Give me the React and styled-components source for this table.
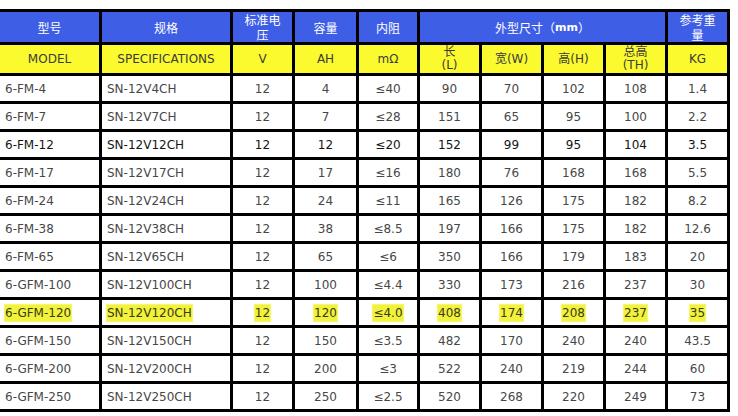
import React from "react";
import styled, { createGlobalStyle, css } from "styled-components";

const Global = createGlobalStyle`
  html, body { margin: 0; padding: 0; background: #ffffff; overflow: hidden; }
  body { font-family: "DejaVu Sans", "Noto Sans CJK SC", sans-serif; }
`;

const Page = styled.div`
  width: 738px;
  height: 416px;
  overflow: hidden;
  padding-top: 9px;
  box-sizing: border-box;
`;

const Grid = styled.div`
  display: grid;
  grid-template-columns: 102px 131px 62px 64px 61px 62px 62px 62px 62px 62px;
  grid-template-rows: 33px 31px repeat(12, 28px);
  width: max-content;
  margin-left: -3px;
  border-top: 3px solid #000;
  border-left: 3px solid #000;
`;

const cellBase = css`
  box-sizing: border-box;
  border-right: 3px solid #000;
  border-bottom: 3px solid #000;
  display: flex;
  align-items: center;
  font-size: 12px;
  white-space: nowrap;
  overflow: hidden;
`;

const HeaderCell = styled.div`
  ${cellBase};
  grid-column: ${(p) => (p.$span ? `span ${p.$span}` : "auto")};
  background: #3f5ee6;
  color: #ffffff;
  justify-content: center;
  text-align: center;
  line-height: 15px;
  font-family: "Noto Sans CJK SC", "DejaVu Sans", sans-serif;
`;

const Unit = styled.span`
  font-family: "DejaVu Sans", sans-serif;
  font-weight: bold;
  font-size: 11px;
`;

const SubHeaderCell = styled.div`
  ${cellBase};
  background: #fafa2e;
  color: #3a3a3a;
  justify-content: center;
  text-align: center;
  line-height: 13px;
`;

const DataCell = styled.div`
  ${cellBase};
  background: #ffffff;
  color: ${(p) => (p.$dark ? "#151515" : "#474747")};
  justify-content: ${(p) => (p.$left ? "flex-start" : "center")};
  padding-left: ${(p) => (p.$left ? "5px" : "0")};
`;

const Mark = styled.span`
  background: #f2f23a;
  color: #3a3a1a;
  padding: 1px 0;
  box-shadow: 0 0 1px 1px #f5f57a;
`;

const rows = [
  ["6-FM-4", "SN-12V4CH", "12", "4", "≤40", "90", "70", "102", "108", "1.4"],
  ["6-FM-7", "SN-12V7CH", "12", "7", "≤28", "151", "65", "95", "100", "2.2"],
  ["6-FM-12", "SN-12V12CH", "12", "12", "≤20", "152", "99", "95", "104", "3.5"],
  ["6-FM-17", "SN-12V17CH", "12", "17", "≤16", "180", "76", "168", "168", "5.5"],
  ["6-FM-24", "SN-12V24CH", "12", "24", "≤11", "165", "126", "175", "182", "8.2"],
  ["6-FM-38", "SN-12V38CH", "12", "38", "≤8.5", "197", "166", "175", "182", "12.6"],
  ["6-FM-65", "SN-12V65CH", "12", "65", "≤6", "350", "166", "179", "183", "20"],
  ["6-GFM-100", "SN-12V100CH", "12", "100", "≤4.4", "330", "173", "216", "237", "30"],
  ["6-GFM-120", "SN-12V120CH", "12", "120", "≤4.0", "408", "174", "208", "237", "35"],
  ["6-GFM-150", "SN-12V150CH", "12", "150", "≤3.5", "482", "170", "240", "240", "43.5"],
  ["6-GFM-200", "SN-12V200CH", "12", "200", "≤3", "522", "240", "219", "244", "60"],
  ["6-GFM-250", "SN-12V250CH", "12", "250", "≤2.5", "520", "268", "220", "249", "73"],
];

export default function App() {
  return (
    <Page>
      <Global />
      <Grid>
        <HeaderCell>型号</HeaderCell>
        <HeaderCell>规格</HeaderCell>
        <HeaderCell>标准电<br />压</HeaderCell>
        <HeaderCell>容量</HeaderCell>
        <HeaderCell>内阻</HeaderCell>
        <HeaderCell $span={4}>外型尺寸（<Unit>mm</Unit>）</HeaderCell>
        <HeaderCell>参考重<br />量</HeaderCell>

        <SubHeaderCell>MODEL</SubHeaderCell>
        <SubHeaderCell>SPECIFICATIONS</SubHeaderCell>
        <SubHeaderCell>V</SubHeaderCell>
        <SubHeaderCell>AH</SubHeaderCell>
        <SubHeaderCell>mΩ</SubHeaderCell>
        <SubHeaderCell>长<br />(L)</SubHeaderCell>
        <SubHeaderCell>宽(W)</SubHeaderCell>
        <SubHeaderCell>高(H)</SubHeaderCell>
        <SubHeaderCell>总高<br />(TH)</SubHeaderCell>
        <SubHeaderCell>KG</SubHeaderCell>

        {rows.map((r) => {
          const highlight = r[0] === "6-GFM-120";
          const dark = r[0] === "6-FM-12";
          return r.map((v, i) => (
            <DataCell key={r[0] + i} $left={i < 2} $dark={dark}>
              {highlight ? <Mark>{v}</Mark> : v}
            </DataCell>
          ));
        })}
      </Grid>
    </Page>
  );
}
